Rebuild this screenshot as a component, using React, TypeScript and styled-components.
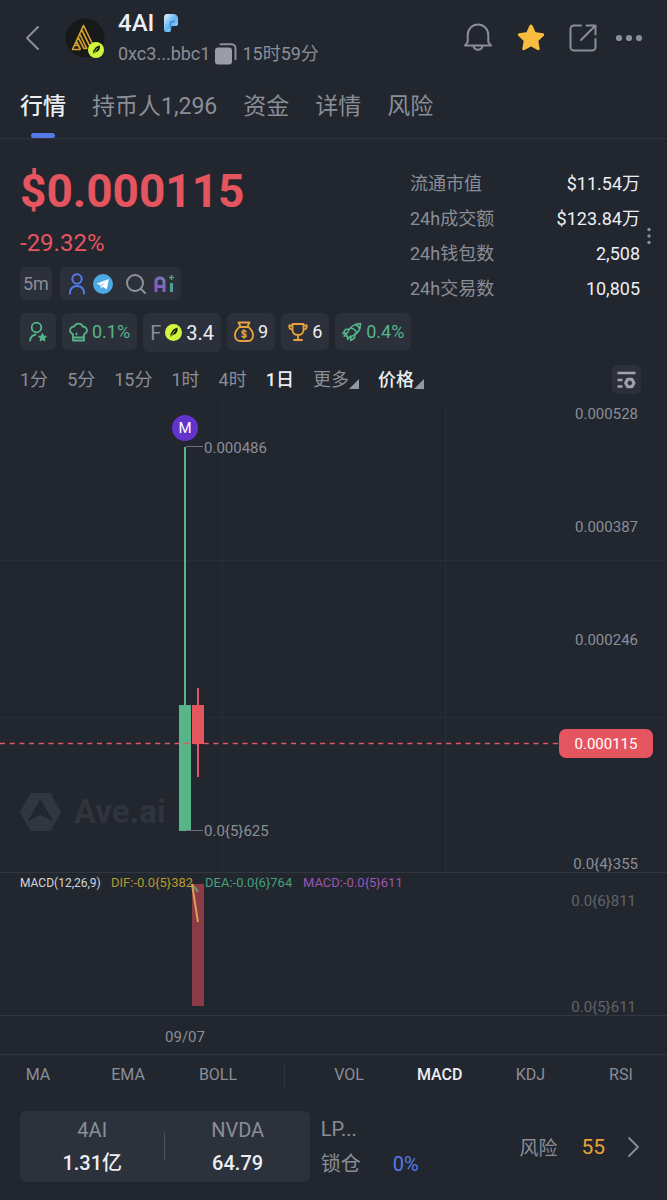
import React from "react";
import styled, { createGlobalStyle } from "styled-components";

const c = {
  bg: "#22262e",
  chip: "#2b303a",
  card: "#2c323c",
  line: "#2f343d",
  grid: "#292d36",
  text: "#eceef3",
  muted: "#8a8e97",
  green: "#56b68a",
  red: "#e5555f",
  blue: "#5579e8",
  amber: "#e8a23c",
  lime: "#d0f63e",
};

const fonts = `Roboto, "Noto Sans CJK SC", sans-serif`;

const GlobalStyle = createGlobalStyle`
  * { box-sizing: border-box; }
  body { margin: 0; background: ${c.bg}; color: ${c.text}; font-family: ${fonts}; }
  button { font: inherit; color: inherit; background: none; border: 0; padding: 0; cursor: pointer; }
  a { color: inherit; text-decoration: none; }
  svg { display: block; flex: none; }
`;

const Page = styled.main`
  min-height: 100vh;
  background: ${c.bg};
`;

const Header = styled.header`
  display: flex;
  align-items: center;
  padding: 8px 24px 0;
`;

const IconButton = styled.button`
  display: flex;
  align-items: center;
  justify-content: center;
  color: ${c.muted};
`;

const LogoWrap = styled.div`
  margin: 0 13px 0 25px;
`;

const TokenInfo = styled.div`
  flex: 1;
`;

const TokenName = styled.h1`
  display: flex;
  align-items: center;
  gap: 8px;
  margin: 0;
  font-size: 24px;
  font-weight: 500;
  line-height: 30px;
`;

const TokenMeta = styled.div`
  display: flex;
  align-items: center;
  gap: 5px;
  padding-top: 2px;
  color: ${c.muted};
  font-size: 18px;
  line-height: 28px;
`;

const HeaderActions = styled.div`
  display: flex;
  align-items: center;
  gap: 23px;
`;

const MoreButton = styled(IconButton)`
  margin-left: -5px;
`;

const Tabs = styled.nav`
  display: flex;
  gap: 26px;
  padding: 0 20px;
  border-bottom: 1px solid ${c.line};
`;

const Tab = styled.a<{ $active?: boolean }>`
  display: flex;
  flex-direction: column;
  align-items: center;
  gap: 9px;
  padding-top: 22px;
  font-size: 23px;
  line-height: 34px;
  font-weight: ${(p) => (p.$active ? 500 : 400)};
  color: ${(p) => (p.$active ? c.text : c.muted)};
  &::after {
    content: "";
    width: 24px;
    height: 5px;
    border-radius: 3px;
    background: ${(p) => (p.$active ? c.blue : "transparent")};
  }
`;

const Summary = styled.section`
  display: flex;
  justify-content: space-between;
  padding: 24px 15px 0 20px;
`;

const Price = styled.div`
  color: ${c.red};
  font-size: 46px;
  font-weight: 700;
  line-height: 56px;
`;

const Change = styled.div`
  margin-top: 10px;
  color: ${c.red};
  font-size: 24px;
  line-height: 28px;
`;

const Side = styled.div`
  display: flex;
  align-items: center;
  gap: 6px;
  padding-top: 3px;
`;

const Stats = styled.dl`
  width: 230px;
  margin: 0;
  font-size: 18px;
  line-height: 35px;
`;

const Stat = styled.div`
  display: flex;
  justify-content: space-between;
`;

const StatLabel = styled.dt`
  color: ${c.muted};
`;

const StatValue = styled.dd`
  margin: 0;
`;

const LinkRow = styled.div`
  display: flex;
  gap: 8px;
  margin-top: 10px;
`;

const Chip = styled.button<{ $tone?: string; $tall?: boolean }>`
  display: flex;
  align-items: center;
  gap: 4px;
  height: ${(p) => (p.$tall ? 39 : 37)}px;
  padding: 0 7px;
  border-radius: 6px;
  background: ${c.chip};
  color: ${(p) => p.$tone || c.text};
  font-size: ${(p) => (p.$tall ? 20 : 18)}px;
`;

const PeriodChip = styled(Chip)`
  height: 33px;
  padding: 0 3px;
`;

const LinkGroup = styled.div`
  display: flex;
  align-items: center;
  height: 33px;
  padding: 0 6px 0 8px;
  gap: 7px;
  border-radius: 6px;
  background: ${c.chip};
`;

const SearchLink = styled.a`
  margin-left: 5px;
`;

const ChipRow = styled.div`
  display: flex;
  align-items: flex-start;
  gap: 6px;
  padding: 7px 20px 0;
`;

const Faded = styled.span`
  color: ${c.muted};
`;

const Periods = styled.div`
  display: flex;
  align-items: center;
  gap: 19px;
  padding: 13px 26px 0 20px;
`;

const Period = styled.button<{ $active?: boolean }>`
  display: flex;
  align-items: flex-end;
  font-size: 18px;
  line-height: 29px;
  font-weight: ${(p) => (p.$active ? 500 : 400)};
  color: ${(p) => (p.$active ? c.text : c.muted)};
`;

const Corner = styled.span`
  width: 10px;
  height: 10px;
  margin-bottom: 5px;
  background: #9498a0;
  clip-path: polygon(100% 0, 100% 100%, 0 100%);
`;

const SettingsButton = styled(IconButton)`
  width: 29px;
  height: 29px;
  margin-left: auto;
  border-radius: 6px;
  background: ${c.chip};
  color: #a0a3ab;
`;

const Chart = styled.svg`
  width: 100%;
  height: auto;
  font-family: ${fonts};
  font-size: 15px;
  fill: ${c.muted};
`;

const Indicators = styled.div`
  display: flex;
  align-items: center;
  padding: 0 22px 0 14px;
  border-top: 1px solid ${c.line};
`;

const IndicatorGroup = styled.div<{ $grow: number }>`
  display: flex;
  justify-content: space-between;
  flex: ${(p) => p.$grow} 1 0;
`;

const Indicator = styled.button<{ $active?: boolean }>`
  width: 48px;
  font-size: 16px;
  line-height: 40px;
  font-weight: ${(p) => (p.$active ? 500 : 400)};
  color: ${(p) => (p.$active ? c.text : c.muted)};
`;

const IndicatorDivider = styled.span`
  width: 1px;
  height: 24px;
  margin: 0 40px 0 42px;
  background: ${c.line};
`;

const Footer = styled.section`
  display: flex;
  align-items: center;
  padding: 16px 27px 18px 20px;
  font-size: 20px;
  color: ${c.muted};
`;

const PoolCard = styled.div`
  display: flex;
  align-items: center;
  flex: 292 1 0;
  height: 71px;
  border-radius: 6px;
  background: ${c.card};
`;

const PoolSide = styled.div`
  flex: 1;
  text-align: center;
  line-height: 33px;
`;

const PoolValue = styled.div`
  color: ${c.text};
  font-weight: 500;
`;

const PoolDivider = styled.span`
  width: 1px;
  height: 27px;
  background: #4c515b;
`;

const Lock = styled.div`
  flex: 200 1 0;
  padding-left: 11px;
  line-height: 35px;
`;

const LockRow = styled.div`
  display: flex;
  gap: 32px;
`;

const Blue = styled.span`
  color: ${c.blue};
`;

const Risk = styled.a`
  display: flex;
  align-items: center;
  font-size: 19px;
`;

const RiskScore = styled.span`
  margin: 0 22px 0 24px;
  color: ${c.amber};
  font-size: 21px;
`;

const FeatherArt = () => (
  <>
    <circle cx="8" cy="8" r="8" fill={c.lime} />
    <path d="M4.8 12.4 5.4 8.6 8 5l3.8-1.8.1 3.2-1.7 2.8-2.7 1.1z" fill="#1c2108" />
    <path d="m5 12 4.600-6" stroke={c.lime} strokeWidth=".7" />
  </>
);

const stroke = {
  fill: "none",
  stroke: "currentColor",
  strokeLinecap: "round" as const,
  strokeLinejoin: "round" as const,
};

const Logo = () => (
  <svg width="40" height="40" viewBox="0 0 40 40">
    <circle cx="20" cy="20" r="19.5" fill="#17181a" />
    <path
      d="M15.500 31.500H7.500L18.500 7.500 28 27M9.500 27.500h4M16.800 12 26 30.500M15 16.500 21.800 30.500H19L13.200 19.500M11.500 23.500 15.500 31.500"
      fill="none"
      stroke="#d2a02c"
      strokeWidth="1.700"
      strokeLinejoin="round"
    />
    <g transform="translate(23 24)">
      <FeatherArt />
    </g>
  </svg>
);

const stats = [
  ["流通市值", "$11.54万"],
  ["24h成交额", "$123.84万"],
  ["24h钱包数", "2,508"],
  ["24h交易数", "10,805"],
];

const tabs = ["行情", "持币人1,296", "资金", "详情", "风险"];
const periods = ["1分", "5分", "15分", "1时", "4时", "1日"];

function PriceChart() {
  return (
    <Chart viewBox="0 394 667 660" role="img" aria-label="4AI 1日">
      <path d="M0 560.500H667M0 717.500H667M222.500 402V872M445.500 402V872" stroke={c.grid} />
      <path d="M0 872.500H667M0 1015.500H667" stroke="#32373f" />

      <g>
        <path d="M30.500 793h20L61 812.500 50.500 831h-20L20 812.500z" fill="#313740" />
        <path d="m40.500 799-13 22.500 13-6.500 13 6.500z" fill={c.bg} />
        <text x="74" y="823" fontSize="33" fontWeight="700" fill="#2f343d">Ave.ai</text>
      </g>

      <path d="M185 447V706" stroke={c.green} strokeWidth="2" />
      <rect x="179" y="705" width="12" height="126" fill={c.green} />
      <path d="M198 688V777" stroke={c.red} strokeWidth="2" />
      <rect x="192" y="705" width="12" height="39" fill={c.red} />
      <line x1="0" y1="743.500" x2="560" y2="743.500" stroke={c.red} strokeWidth="1.500" strokeDasharray="5 4.700" />

      <path d="M186 446.500H203M186 830.500H203" stroke="#6d717a" />
      <text x="204" y="453">0.000486</text>
      <text x="204" y="836">0.0{"{5}"}625</text>

      <circle cx="185" cy="428" r="13" fill="#6433cc" />
      <text x="185" y="433" textAnchor="middle" fill="#fff">M</text>

      <g textAnchor="end">
        <text x="638" y="419">0.000528</text>
        <text x="638" y="532">0.000387</text>
        <text x="638" y="645">0.000246</text>
        <text x="638" y="869">0.0{"{4}"}355</text>
      </g>
      <rect x="559" y="729" width="94" height="29" rx="7" fill={c.red} />
      <text x="606" y="749" textAnchor="middle" fill="#fff">0.000115</text>

      <rect x="192" y="884" width="12" height="122" fill="#8b3b47" />
      <text x="20" y="887" fontSize="12" fill="#d3d5da">MACD(12,26,9)</text>
      <g fontSize="13">
        <text x="111" y="887" fill="#b39b2c">DIF:-0.0{"{5}"}382</text>
        <text x="205" y="887" fill="#46a07b">DEA:-0.0{"{6}"}764</text>
        <text x="303" y="887" fill="#9a57ad">MACD:-0.0{"{5}"}611</text>
      </g>
      <path d="M192 884 198 892" stroke="#6f9c83" strokeWidth="2" />
      <path d="M192 884 198 922" stroke="#dba050" strokeWidth="2" />
      <g textAnchor="end" fill="#60646d">
        <text x="636" y="906">0.0{"{6}"}811</text>
        <text x="636" y="1012">0.0{"{5}"}611</text>
      </g>
      <text x="185" y="1042" textAnchor="middle">09/07</text>
    </Chart>
  );
}

export default function App() {
  return (
    <Page>
      <GlobalStyle />
      <Header>
        <IconButton aria-label="返回">
          <svg width="16" height="26" viewBox="0 0 16 26" {...stroke} strokeWidth="2">
            <path d="M14 2 3 13l11 11" />
          </svg>
        </IconButton>
        <LogoWrap><Logo /></LogoWrap>
        <TokenInfo>
          <TokenName>
            4AI
            <svg width="18" height="20" viewBox="0 0 18 20">
              <defs>
                <linearGradient id="flag" x1="0" y1="0" x2="1" y2="1">
                  <stop offset="0" stopColor="#e9f6ff" />
                  <stop offset=".5" stopColor="#63b6f2" />
                  <stop offset="1" stopColor="#a9d6f8" />
                </linearGradient>
              </defs>
              <path d="M5 1h6q5 0 5 5v5q0 2-2 2h-3.500q-1.500 0-1.500 1.500V17q0 2-2 2H4q-2 0-2-2V5q0-4 3-4z" fill="url(#flag)" />
              <path d="M8.500 16v-5.500q0-2 2-2H13" fill="none" stroke="#3c8fd6" strokeWidth="1.600" />
            </svg>
          </TokenName>
          <TokenMeta>
            <span>0xc3...bbc1</span>
            <IconButton aria-label="复制">
              <svg width="22" height="22" viewBox="0 0 22 22">
                <path d="M5.500 1.200h11a4 4 0 0 1 4 4v11" fill="none" stroke="#8a8e97" strokeWidth="2" strokeLinecap="round" />
                <rect x="0" y="4.500" width="17" height="17" rx="3" fill="#9a9da5" />
              </svg>
            </IconButton>
            <span>15时59分</span>
          </TokenMeta>
        </TokenInfo>
        <HeaderActions>
          <IconButton aria-label="提醒">
            <svg width="30" height="30" viewBox="0 0 30 30" {...stroke} strokeWidth="2">
              <path d="M2 22.500 4.700 19v-7A10.300 10.300 0 0 1 15 1.500 10.300 10.300 0 0 1 25.300 12v7l2.700 3.500zM10.500 23a4.600 4.600 0 0 0 9 0" />
            </svg>
          </IconButton>
          <IconButton aria-label="收藏">
            <svg width="30" height="30" viewBox="0 0 30 30">
              <path d="m15 3 3.500 7.600 8.200 1.100-6 5.800 1.500 8.300-7.200-4-7.200 4 1.500-8.300-6-5.800 8.200-1.100z" fill="#f8bd3e" stroke="#f8bd3e" strokeWidth="3" strokeLinejoin="round" />
            </svg>
          </IconButton>
          <IconButton aria-label="分享">
            <svg width="28" height="28" viewBox="0 0 28 28" {...stroke} strokeWidth="2">
              <path d="M12 1.500H5A3.500 3.500 0 0 0 1.500 5v18A3.500 3.500 0 0 0 5 26.500h18a3.500 3.500 0 0 0 3.500-3.500v-8M17.500 1.500h9v9M26 2 12 16" />
            </svg>
          </IconButton>
          <MoreButton aria-label="更多">
            <svg width="28" height="8" viewBox="0 0 28 8" fill="currentColor">
              <circle cx="4" cy="4" r="3.100" />
              <circle cx="14" cy="4" r="3.100" />
              <circle cx="24" cy="4" r="3.100" />
            </svg>
          </MoreButton>
        </HeaderActions>
      </Header>

      <Tabs>
        {tabs.map((t, i) => (
          <Tab key={t} href="#" $active={i === 0}>{t}</Tab>
        ))}
      </Tabs>

      <Summary>
        <div>
          <Price>$0.000115</Price>
          <Change>-29.32%</Change>
          <LinkRow>
            <PeriodChip $tone={c.muted}>5m</PeriodChip>
            <LinkGroup>
              <a href="#" aria-label="持有人">
                <svg width="18" height="22" viewBox="0 0 18 22" {...stroke} stroke={c.blue} strokeWidth="2">
                  <circle cx="9" cy="6" r="4.700" />
                  <path d="M2 20.500c0-5 3-7.500 7-7.500s7 2.500 7 7.500" />
                </svg>
              </a>
              <a href="#" aria-label="Telegram">
                <svg width="20" height="20" viewBox="0 0 20 20">
                  <circle cx="10" cy="10" r="10" fill="#4ba9e4" />
                  <path d="M3.500 9.800 15.800 5l-2 10.500-4-2.700-1.800 2-.6-3.800z" fill="#fff" />
                  <path d="m7.500 11 6-4.300-4.300 5.200-1 2.300z" fill="#b9dcf3" />
                </svg>
              </a>
              <SearchLink href="#" aria-label="搜索">
                <svg width="22" height="22" viewBox="0 0 22 22" {...stroke} stroke="#8e929a" strokeWidth="2">
                  <circle cx="10" cy="10" r="8" />
                  <path d="m16 16 4 4" />
                </svg>
              </SearchLink>
              <a href="#" aria-label="Ai">
                <svg width="21" height="20" viewBox="0 0 21 20" fill="none" strokeWidth="3">
                  <defs>
                    <linearGradient id="ai" gradientUnits="userSpaceOnUse" x1="0" y1="18" x2="21" y2="2">
                      <stop offset="0" stopColor="#8a4fd0" />
                      <stop offset=".45" stopColor="#7b6cb9" />
                      <stop offset="1" stopColor="#43b890" />
                    </linearGradient>
                  </defs>
                  <path d="M2 18V8q0-4 4-4t4 4v10M2 12.500h8" stroke="url(#ai)" />
                  <path d="M17.500 1v5M15 3.500h5" stroke="#4aa58c" strokeWidth="1.500" />
                  <path d="M17.500 9v9" stroke="#4f9d94" />
                </svg>
              </a>
            </LinkGroup>
          </LinkRow>
        </div>
        <Side>
          <Stats>
            {stats.map(([k, v]) => (
              <Stat key={k}>
                <StatLabel>{k}</StatLabel>
                <StatValue>{v}</StatValue>
              </Stat>
            ))}
          </Stats>
          <IconButton aria-label="展开">
            <svg width="6" height="18" viewBox="0 0 6 18" fill="currentColor">
              <circle cx="3" cy="2.500" r="1.700" />
              <circle cx="3" cy="9" r="1.700" />
              <circle cx="3" cy="15.500" r="1.700" />
            </svg>
          </IconButton>
        </Side>
      </Summary>

      <ChipRow>
        <Chip $tone={c.green} aria-label="关注">
          <svg width="22" height="22" viewBox="0 0 22 22" {...stroke} strokeWidth="1.800">
            <circle cx="9.500" cy="6.500" r="4.800" />
            <path d="M3 19.500c.5-3.500 2.500-5.300 5.500-6" />
            <path d="m15.500 12.500 1.200 2.500 2.700.4-2 1.900.5 2.700-2.400-1.300-2.400 1.300.5-2.700-2-1.900 2.700-.4z" fill="currentColor" strokeWidth="1" />
          </svg>
        </Chip>
        <Chip $tone={c.green}>
          <svg width="19" height="20" viewBox="0 0 19 20" {...stroke} strokeWidth="1.800">
            <path d="M4 18.500v-6.500A4 4 0 0 1 1 8.500 4 4 0 0 1 5.300 4.500 4.500 4.500 0 0 1 13.700 4.500 4 4 0 0 1 18 8.500 4 4 0 0 1 15 12v6.500zM4 15.500h11M7.500 11.500v1" />
          </svg>
          0.1%
        </Chip>
        <Chip $tall>
          <Faded>F</Faded>
          <svg width="17" height="17" viewBox="0 0 16 16"><FeatherArt /></svg>
          3.4
        </Chip>
        <Chip>
          <svg width="20" height="21" viewBox="0 0 20 21" {...stroke} stroke={c.amber} strokeWidth="1.800">
            <path d="M6.500 5.500 4.500 1.500h11l-2 4M5.500 6h9q4.500 4 4.500 8 0 6-5 6H6q-5 0-5-6 0-4 4.500-8z" />
            <path d="M12.200 10.800Q11.500 9.800 10 9.800q-2 0-2 1.500T10 13q2.200.2 2.200 1.700T10 16.200q-1.600 0-2.200-1M10 8.800v8.400" strokeWidth="1.400" />
          </svg>
          9
        </Chip>
        <Chip>
          <svg width="20" height="20" viewBox="0 0 20 20" {...stroke} stroke={c.amber} strokeWidth="1.800">
            <path d="M4.500 2h11v5.500q0 5.500-5.500 5.500T4.500 7.500zM4.500 3.500H1.200q0 4 3 4M15.500 3.500h3.300q0 4-3 4M10 13v4.500M6 18h8" />
          </svg>
          6
        </Chip>
        <Chip $tone={c.green}>
          <svg width="20" height="20" viewBox="0 0 20 20" {...stroke} strokeWidth="1.500">
            <path d="M5.500 10.500Q9 2 18.500 1.500 19 10.500 9.500 14.500M7.500 7 3.500 7.500 1 11.500l4.500-.5-3.500 3h3.500v3.500l3-3.500M13 11.500l-.5 4.500-4 2.500.5-4M8.500 6q5.500 1 6 5M13.500 2.500q3.500 1.500 4 4.500" />
          </svg>
          0.4%
        </Chip>
      </ChipRow>

      <Periods>
        {periods.map((p) => (
          <Period key={p} $active={p === "1日"}>{p}</Period>
        ))}
        <Period>更多<Corner /></Period>
        <Period $active>价格<Corner /></Period>
        <SettingsButton aria-label="设置">
          <svg width="19" height="18" viewBox="0 0 19 18" fill="none" stroke="currentColor" strokeWidth="2.600">
            <path d="M.5 2h18M.5 9h5M.5 15.500h5" />
            <path d="M10.700 8.200h4.200l2.100 3.800-2.100 3.800h-4.200L8.600 12z" strokeWidth="3" strokeLinejoin="round" />
          </svg>
        </SettingsButton>
      </Periods>

      <PriceChart />

      <Indicators>
        <IndicatorGroup $grow={228}>
          <Indicator>MA</Indicator>
          <Indicator>EMA</Indicator>
          <Indicator>BOLL</Indicator>
        </IndicatorGroup>
        <IndicatorDivider />
        <IndicatorGroup $grow={320}>
          <Indicator>VOL</Indicator>
          <Indicator $active>MACD</Indicator>
          <Indicator>KDJ</Indicator>
          <Indicator>RSI</Indicator>
        </IndicatorGroup>
      </Indicators>

      <Footer>
        <PoolCard>
          <PoolSide>
            <div>4AI</div>
            <PoolValue>1.31亿</PoolValue>
          </PoolSide>
          <PoolDivider />
          <PoolSide>
            <div>NVDA</div>
            <PoolValue>64.79</PoolValue>
          </PoolSide>
        </PoolCard>
        <Lock>
          <div>LP...</div>
          <LockRow>
            <span>锁仓</span>
            <Blue>0%</Blue>
          </LockRow>
        </Lock>
        <Risk href="#">
          风险
          <RiskScore>55</RiskScore>
          <svg width="13" height="22" viewBox="0 0 13 22" {...stroke} strokeWidth="1.800">
            <path d="m2 2 9 9-9 9" />
          </svg>
        </Risk>
      </Footer>
    </Page>
  );
}
